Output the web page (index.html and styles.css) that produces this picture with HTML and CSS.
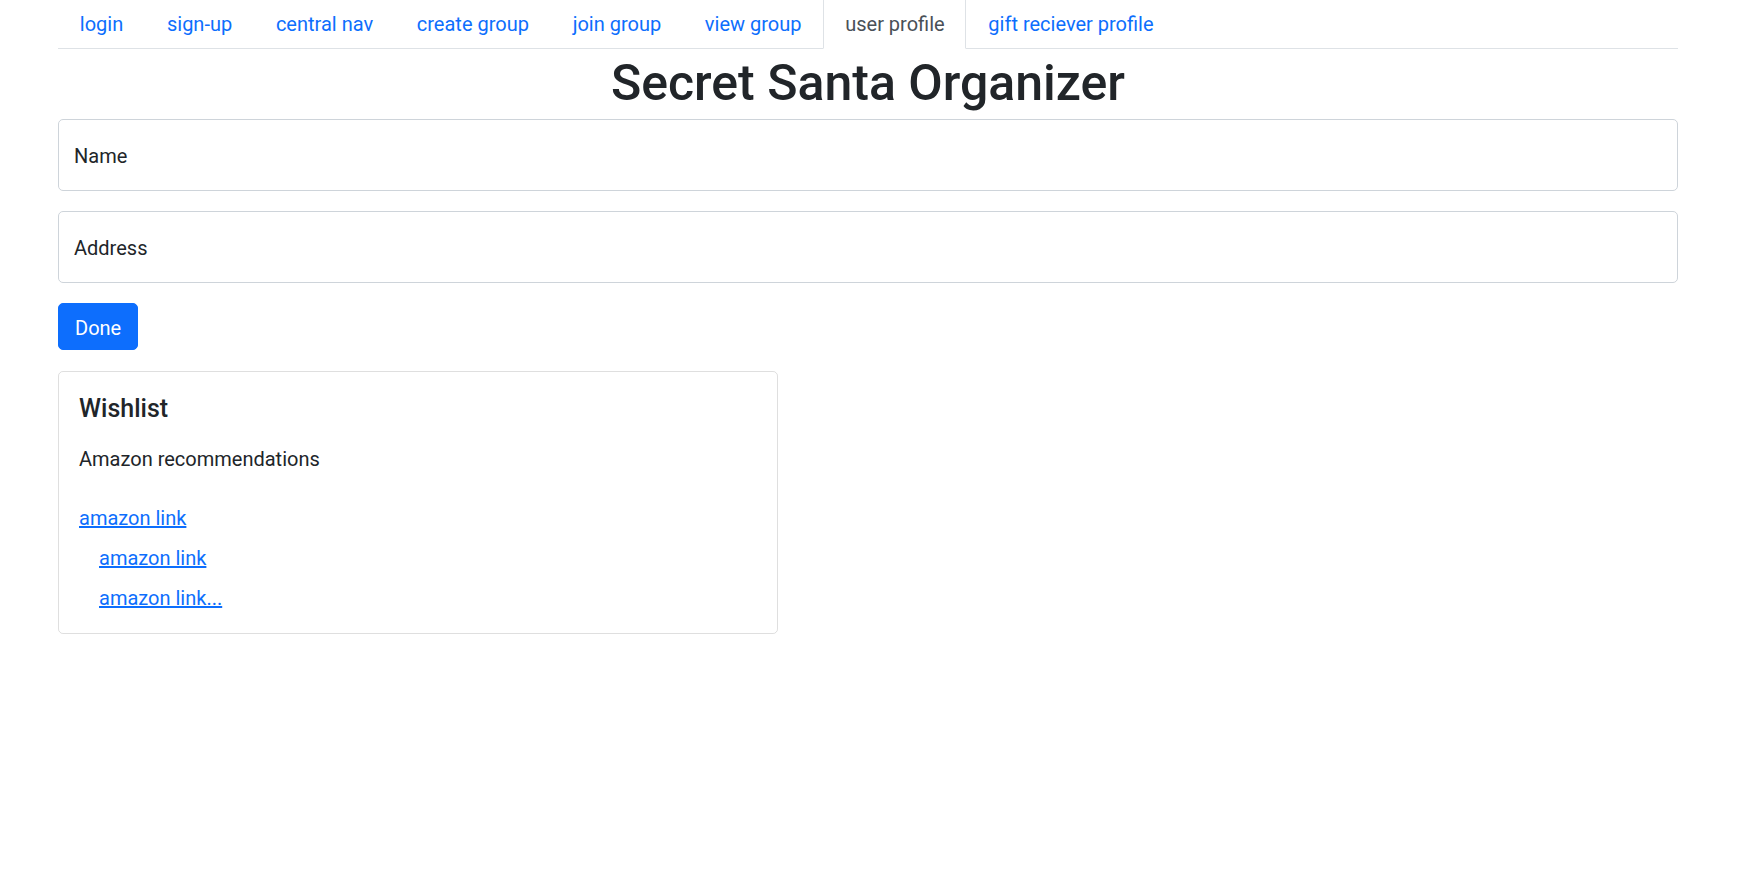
FILE: index.html
```html
<!DOCTYPE html>
<html lang="en">
<head>
<meta charset="utf-8">
<title>Secret Santa Organizer</title>
<link rel="stylesheet" href="styles.css">
</head>
<body>
<div class="container">
  <nav class="tabs">
    <a class="tab-link" href="#">login</a>
    <a class="tab-link" href="#">sign-up</a>
    <a class="tab-link" href="#">central nav</a>
    <a class="tab-link" href="#">create group</a>
    <a class="tab-link" href="#">join group</a>
    <a class="tab-link" href="#">view group</a>
    <a class="tab-link active" href="#">user profile</a>
    <a class="tab-link" href="#">gift reciever profile</a>
  </nav>
  <h1 class="title">Secret Santa Organizer</h1>
  <form class="profile-form">
    <input class="field" type="text" placeholder="Name">
    <input class="field" type="text" placeholder="Address">
    <button class="btn-primary" type="button">Done</button>
  </form>
  <div class="card">
    <h5 class="card-title">Wishlist</h5>
    <p class="card-text">Amazon recommendations</p>
    <a class="link" href="#">amazon link</a>
    <a class="link indent" href="#">amazon link</a>
    <a class="link indent" href="#">amazon link...</a>
  </div>
</div>
</body>
</html>
```
FILE: styles.css
```css
* { box-sizing: border-box; }
body {
  margin: 0;
  font-family: Roboto, "Liberation Sans", sans-serif;
  font-size: 20px;
  line-height: 30px;
  color: #212529;
  background: #fff;
}
.container {
  margin-left: 58px;
  width: 1620px;
}
.tabs {
  display: flex;
  border-bottom: 1px solid #dee2e6;
  height: 49px;
}
.tab-link {
  display: block;
  height: 49px;
  line-height: 48px;
  padding: 0 20.85px;
  border: 1px solid transparent;
  border-top: 0;
  margin-bottom: -1px;
  color: #0d6efd;
  text-decoration: none;
  font-size: 20px;
}
.tab-link.active {
  color: #495057;
  background: #fff;
  border-color: #dee2e6 #dee2e6 #fff;
}
.title {
  margin: 4px 0 6px;
  font-size: 50px;
  line-height: 60px;
  font-weight: 500;
  text-align: center;
}
.profile-form {
  display: flex;
  flex-direction: column;
  align-items: flex-start;
}
.field {
  width: 100%;
  height: 72px;
  margin-bottom: 20px;
  padding: 2px 15px 0;
  border: 1px solid #ced4da;
  border-radius: 5px;
  font-family: inherit;
  font-size: 20px;
  color: #212529;
  background: #fff;
  outline: none;
}
.field::placeholder { color: #212529; opacity: 1; }
.btn-primary {
  height: 47px;
  padding: 2px 16px 0;
  border: 1px solid #0d6efd;
  border-radius: 5px;
  background: #0d6efd;
  color: #fff;
  font-family: inherit;
  font-size: 20px;
  line-height: 30px;
  cursor: pointer;
}
.card {
  display: flex;
  flex-direction: column;
  align-items: flex-start;
  width: 720px;
  margin-top: 21px;
  padding: 22px 20px 20px;
  border: 1px solid rgba(0, 0, 0, 0.125);
  border-radius: 5px;
}
.card-title {
  margin: 0 0 20px;
  font-size: 25px;
  line-height: 30px;
  font-weight: 500;
}
.card-text {
  margin: 0 0 29px;
}
.link {
  color: #0d6efd;
  text-decoration: underline;
  margin-bottom: 10px;
}
.link:last-child { margin-bottom: 0; }
.indent { margin-left: 20px; }
```
